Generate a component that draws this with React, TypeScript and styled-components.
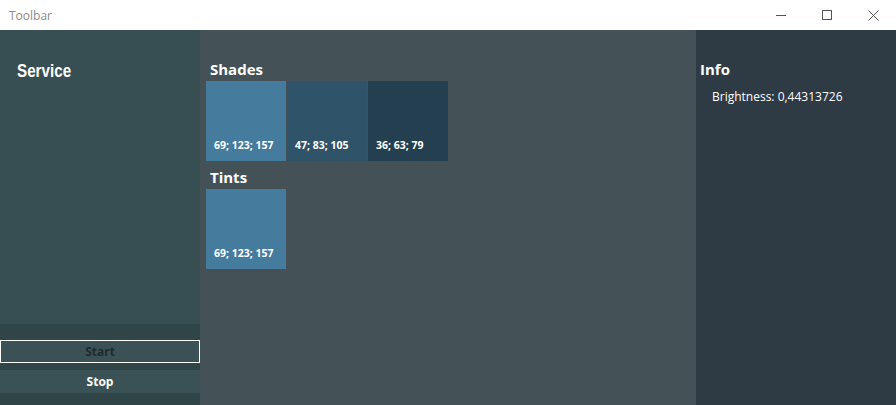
import React from "react";
import styled, { createGlobalStyle } from "styled-components";

const Global = createGlobalStyle`
  html, body { margin: 0; padding: 0; background: #ffffff; }
  body { font-family: "Open Sans", "Noto Sans", sans-serif; overflow: hidden; }
`;

const Window = styled.div`
  width: 896px;
  height: 405px;
  display: flex;
  flex-direction: column;
`;

const TitleBar = styled.div`
  height: 30px;
  flex: none;
  display: flex;
  align-items: center;
  background: #ffffff;
`;

const Title = styled.span`
  flex: 1;
  padding-left: 9px;
  font-size: 12px;
  color: #8a8a8a;
  font-family: "Open Sans", sans-serif;
`;

const Ctrl = styled.div`
  width: 46px;
  height: 30px;
  display: flex;
  align-items: center;
  justify-content: center;
`;

const Body = styled.div`
  flex: 1;
  display: flex;
  min-height: 0;
`;

const Sidebar = styled.div`
  width: 200px;
  flex: none;
  background: #374f52;
  display: flex;
  flex-direction: column;
`;

const ServiceArea = styled.div`
  flex: 1;
  padding: 28px 0 0 17px;
`;

const ServiceTitle = styled.span`
  display: inline-block;
  font-family: "Liberation Sans", Arial, sans-serif;
  font-weight: bold;
  font-size: 19px;
  line-height: 26px;
  color: #ffffff;
  transform: scaleX(0.8);
  transform-origin: left center;
`;

const Bottom = styled.div`
  background: #2f4548;
  padding: 16px 0 12px;
  display: flex;
  flex-direction: column;
  gap: 7px;
`;

const Btn = styled.div<{ $focused?: boolean }>`
  height: 23px;
  box-sizing: border-box;
  background: #3a5256;
  border: 1px solid ${(p) => (p.$focused ? "#ffffff" : "transparent")};
  color: ${(p) => (p.$focused ? "#1f2a2c" : "#ffffff")};
  font-weight: 700;
  font-size: 12px;
  display: flex;
  align-items: center;
  justify-content: center;
`;

const Main = styled.div`
  flex: 1;
  background: #445157;
  padding: 29px 0 0 6px;
`;

const SectionTitle = styled.div`
  font-weight: 700;
  font-size: 15px;
  color: #ffffff;
  padding-left: 4px;
  line-height: 20px;
  margin-bottom: 2px;
`;

const SwatchRow = styled.div`
  display: flex;
  gap: 1px;
  margin-bottom: 6px;
`;

const Swatch = styled.div<{ $bg: string }>`
  width: 80px;
  height: 80px;
  background: ${(p) => p.$bg};
  display: flex;
  align-items: flex-end;
  padding: 0 0 9px 8px;
  box-sizing: border-box;
  font-size: 10.5px;
  font-weight: 700;
  color: #ffffff;
`;

const InfoPanel = styled.div`
  width: 200px;
  flex: none;
  background: #2e3a44;
  padding: 29px 0 0 0;
  box-sizing: border-box;
`;

const InfoText = styled.div`
  padding: 7px 0 0 16px;
  font-size: 12px;
  color: #ffffff;
`;

const shades = [
  { c: "rgb(69,123,157)", t: "69; 123; 157" },
  { c: "rgb(47,83,105)", t: "47; 83; 105" },
  { c: "rgb(36,63,79)", t: "36; 63; 79" },
];

export default function App() {
  return (
    <Window>
      <Global />
      <TitleBar>
        <Title>Toolbar</Title>
        <Ctrl>
          <svg width="10" height="10" viewBox="0 0 10 10">
            <line x1="0" y1="5.5" x2="10" y2="5.5" stroke="#555" strokeWidth="1" />
          </svg>
        </Ctrl>
        <Ctrl>
          <svg width="10" height="10" viewBox="0 0 10 10">
            <rect x="0.5" y="0.5" width="9" height="9" fill="none" stroke="#555" strokeWidth="1" />
          </svg>
        </Ctrl>
        <Ctrl>
          <svg width="11" height="11" viewBox="0 0 11 11">
            <path d="M0.5 0.5 L10.5 10.5 M10.5 0.5 L0.5 10.5" stroke="#555" strokeWidth="1" />
          </svg>
        </Ctrl>
      </TitleBar>
      <Body>
        <Sidebar>
          <ServiceArea>
            <ServiceTitle>Service</ServiceTitle>
          </ServiceArea>
          <Bottom>
            <Btn $focused>Start</Btn>
            <Btn>Stop</Btn>
          </Bottom>
        </Sidebar>
        <Main>
          <SectionTitle>Shades</SectionTitle>
          <SwatchRow>
            {shades.map((s) => (
              <Swatch key={s.t} $bg={s.c}>{s.t}</Swatch>
            ))}
          </SwatchRow>
          <SectionTitle>Tints</SectionTitle>
          <SwatchRow>
            <Swatch $bg="rgb(69,123,157)">69; 123; 157</Swatch>
          </SwatchRow>
        </Main>
        <InfoPanel>
          <SectionTitle>Info</SectionTitle>
          <InfoText>Brightness: 0,44313726</InfoText>
        </InfoPanel>
      </Body>
    </Window>
  );
}
